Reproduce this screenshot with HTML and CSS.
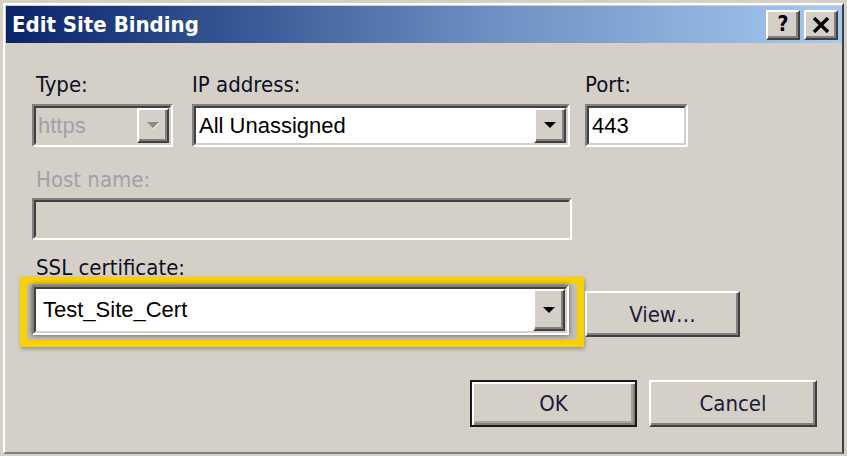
FILE: index.html
```html
<!DOCTYPE html>
<html>
<head>
<meta charset="utf-8">
<link rel="stylesheet" href="styles.css">
</head>
<body>
<div class="frame">
  <div class="window">
    <div class="titlebar">
      <span class="title">Edit Site Binding</span>
      <div class="tbtns">
        <span class="tbtn help">?</span>
        <span class="tbtn close"><svg width="18" height="16" viewBox="0 0 18 16"><path d="M2 1 L16 15 M16 1 L2 15" stroke="#000" stroke-width="3.4" fill="none"/></svg></span>
      </div>
    </div>
    <div class="client">
      <div class="row1">
        <div class="col col-type">
          <span class="lbl">Type:</span>
          <div class="field"><div class="field-in disabled">
            <span class="val val-type">https</span>
            <span class="drop"><svg width="12" height="7" viewBox="0 0 12 7"><path d="M0 0 H12 L6 6 Z" fill="#8a8a8a"/><path d="M6 7 L12 1" stroke="#fff" stroke-width="1"/></svg></span>
          </div></div>
        </div>
        <div class="col col-ip">
          <span class="lbl lbl-flush">IP address:</span>
          <div class="field"><div class="field-in">
            <span class="val">All Unassigned</span>
            <span class="drop"><svg width="12" height="7" viewBox="0 0 12 7"><path d="M0 0 H12 L6 6 Z" fill="#000"/></svg></span>
          </div></div>
        </div>
        <div class="col col-port">
          <span class="lbl lbl-flush">Port:</span>
          <div class="field"><div class="field-in">
            <span class="val">443</span>
          </div></div>
        </div>
      </div>
      <span class="lbl lbl-host">Host name:</span>
      <div class="field host"><div class="field-in disabled"></div></div>
      <span class="lbl lbl-ssl">SSL certificate:</span>
      <div class="ssl-row">
        <div class="hl">
          <div class="field ssl"><div class="field-in">
            <span class="val val-ssl">Test_Site_Cert</span>
            <span class="drop"><svg width="12" height="7" viewBox="0 0 12 7"><path d="M0 0 H12 L6 6 Z" fill="#000"/></svg></span>
          </div></div>
        </div>
        <span class="btn view">View…</span>
      </div>
      <div class="actions">
        <span class="btn default">OK</span>
        <span class="btn cancel">Cancel</span>
      </div>
    </div>
  </div>
</div>
</body>
</html>
```
FILE: styles.css
```css
* { box-sizing: border-box; }
body {
  margin: 0;
  background: #d4d0c8;
  font-family: "DejaVu Sans Condensed", "DejaVu Sans", sans-serif;
  font-stretch: condensed;
}
.frame {
  width: 847px;
  height: 456px;
  padding: 3px 3px 2px 3px;
  background: #d4d0c8;
}
.window {
  height: 100%;
  border: 2px solid;
  border-color: #fff #404040 #808080 #fff;
  padding: 1px 0 0 1px;
  display: flex;
  flex-direction: column;
  background: #d4d0c8;
}
.titlebar {
  flex: none;
  height: 37px;
  display: flex;
  align-items: center;
  justify-content: space-between;
  padding: 0 4px 0 6px;
  background: linear-gradient(to right, #0a246a 0%, #30508e 24%, #6b8cc0 56%, #a6caf0 100%);
}
.title {
  color: #fff;
  font-weight: bold;
  font-size: 22px;
  line-height: 26px;
}
.tbtns { display: flex; gap: 4px; }
.tbtn {
  width: 34px;
  height: 30px;
  display: flex;
  align-items: center;
  justify-content: center;
  background: #d4d0c8;
  border: 2px solid;
  border-color: #fff #404040 #404040 #fff;
  box-shadow: inset -2px -2px 0 #808080;
  font-weight: bold;
  font-size: 21px;
  color: #000;
  line-height: 1;
}
.client {
  flex: 1;
  padding: 29px 25px 0 26px;
  display: flex;
  flex-direction: column;
  align-items: flex-start;
  color: #0e0e24;
}
.lbl {
  display: block;
  font-size: 22px;
  line-height: 26px;
  padding-left: 4px;
  white-space: nowrap;
}
.lbl-flush { padding-left: 0; }
.row1 { display: flex; gap: 0; }
.col { display: flex; flex-direction: column; gap: 6px; }
.col-type { width: 141px; }
.col-ip { width: 378px; margin-left: 19px; }
.col-port { width: 103px; margin-left: 15px; }
.field {
  height: 43px;
  width: 100%;
  border: 2px solid;
  border-color: #808080 #fff #fff #808080;
}
.field-in {
  height: 100%;
  border: 2px solid;
  border-color: #404040 #d4d0c8 #d4d0c8 #404040;
  background: #fff;
  display: flex;
  align-items: stretch;
}
.field-in.disabled { background: #d4d0c8; }
.val {
  flex: 1;
  display: flex;
  align-items: center;
  padding-left: 3px;
  font-family: "Liberation Sans", Arial, sans-serif;
  font-size: 22px;
  color: #000;
  white-space: nowrap;
}
.val-type { color: #a0a0a8; padding-left: 2px; }
.val-ssl { padding-left: 7px; }
.drop {
  width: 32px;
  flex: none;
  display: flex;
  align-items: center;
  justify-content: center;
  background: #d4d0c8;
  border: 2px solid;
  border-color: #fff #404040 #404040 #fff;
  box-shadow: inset -2px -2px 0 #808080;
}
.lbl-host { margin-top: 20px; color: #a0a0a8; }
.host { width: 540px; height: 42px; margin-top: 5px; }
.lbl-ssl { margin-top: 15px; }
.ssl-row {
  display: flex;
  align-items: flex-start;
  margin-top: -4px;
}
.hl {
  margin-left: -12px;
  border: 7px solid #f9d100;
  padding: 1px 8px 5px 5px;
  background: #c2bfb8;
  box-shadow: 1px 2px 4px rgba(0,0,0,0.3);
}
.ssl {
  width: 537px;
  height: 50px;
  box-shadow: 0 0 5px rgba(0,0,0,0.55);
}
.btn {
  display: flex;
  align-items: center;
  justify-content: center;
  background: #d4d0c8;
  border: 2px solid;
  border-color: #fff #404040 #404040 #fff;
  box-shadow: inset -2px -2px 0 #808080;
  font-size: 22px;
  color: #1a1a3a;
}
.view {
  width: 155px;
  height: 46px;
  margin-top: 14px;
  margin-left: 1px;
}
.actions {
  align-self: stretch;
  display: flex;
  justify-content: flex-end;
  gap: 12px;
  margin-top: 33px;
}
.default {
  width: 167px;
  height: 47px;
  border: 2px solid #1a1a1a;
  box-shadow: inset 2px 2px 0 #fff, inset -2px -2px 0 #808080, inset -4px -4px 0 #a8a49c;
}
.cancel { width: 168px; height: 47px; }
```
